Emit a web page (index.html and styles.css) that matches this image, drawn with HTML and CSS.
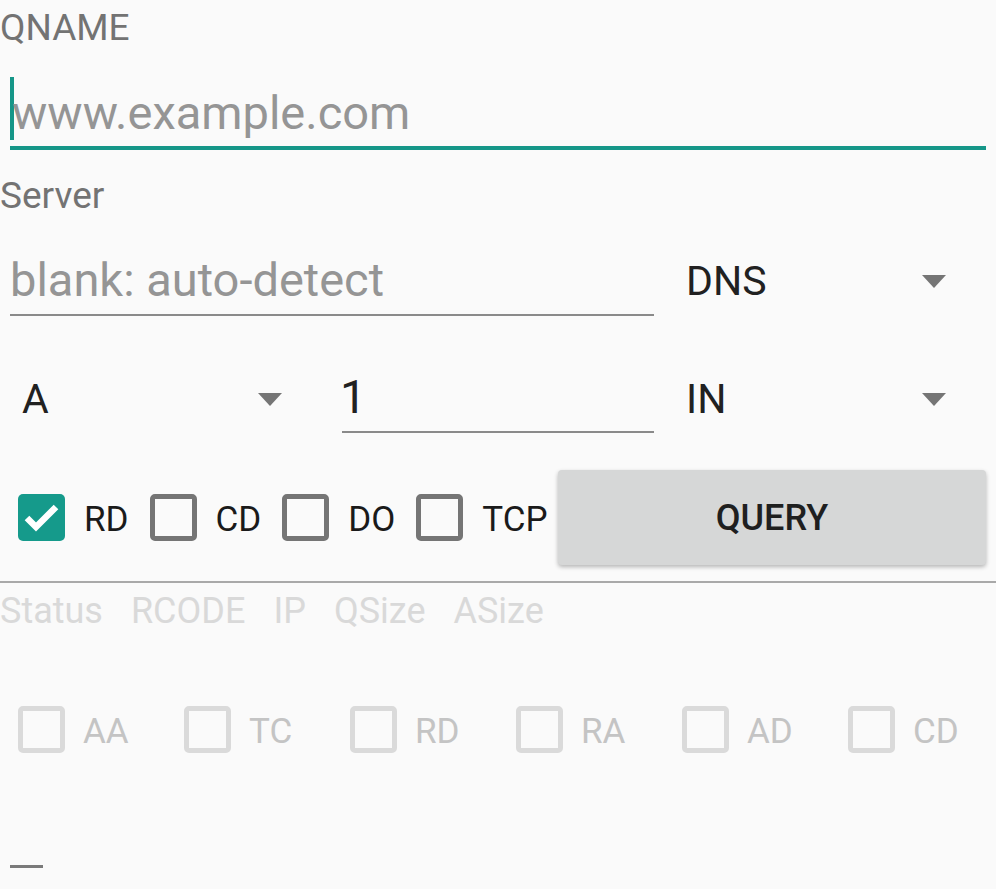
FILE: index.html
```html
<!DOCTYPE html>
<html>
<head>
<meta charset="utf-8">
<link rel="stylesheet" href="styles.css">
</head>
<body>
<div class="page">
  <div class="label">QNAME</div>
  <div class="qfield"><span class="caret"></span><span class="ph">www.example.com</span></div>

  <div class="label server">Server</div>
  <div class="row r2">
    <div class="field wide"><span class="ph">blank: auto-detect</span></div>
    <div class="spinner"><span class="val">DNS</span><span class="tri"></span></div>
  </div>

  <div class="row r3">
    <div class="spinner sp-type"><span class="val">A</span><span class="tri"></span></div>
    <div class="field small"><span class="val-edit">1</span></div>
    <div class="spinner sp-class"><span class="val">IN</span><span class="tri"></span></div>
  </div>

  <div class="row opts">
    <div class="cbitem">
      <span class="cb checked"><svg viewBox="0 0 47 47" width="47" height="47"><polyline points="9,24 18,33 38,13" fill="none" stroke="#ffffff" stroke-width="6.5"/></svg></span>
      <span class="cblabel">RD</span>
    </div>
    <div class="cbitem"><span class="cb"></span><span class="cblabel">CD</span></div>
    <div class="cbitem"><span class="cb"></span><span class="cblabel">DO</span></div>
    <div class="cbitem"><span class="cb"></span><span class="cblabel">TCP</span></div>
    <div class="btn">QUERY</div>
  </div>

  <div class="divider"></div>

  <div class="stats">
    <span>Status</span><span>RCODE</span><span>IP</span><span>QSize</span><span>ASize</span>
  </div>

  <div class="flags">
    <div class="flag"><span class="cb dis"></span><span>AA</span></div>
    <div class="flag"><span class="cb dis"></span><span>TC</span></div>
    <div class="flag"><span class="cb dis"></span><span>RD</span></div>
    <div class="flag"><span class="cb dis"></span><span>RA</span></div>
    <div class="flag"><span class="cb dis"></span><span>AD</span></div>
    <div class="flag"><span class="cb dis"></span><span>CD</span></div>
  </div>

  <div class="dash"></div>
</div>
</body>
</html>
```

FILE: styles.css
```css
html, body {
  margin: 0;
  padding: 0;
  background: #fafafa;
}
body {
  font-family: Roboto, "Noto Sans", "Liberation Sans", sans-serif;
  width: 996px;
  height: 889px;
  overflow: hidden;
}
.label {
  font-size: 37px;
  line-height: 55px;
  color: #737373;
}
.server {
  line-height: 46px;
  margin-top: 23px;
}
.qfield {
  display: flex;
  align-items: flex-start;
  margin: 0 10px;
  padding-top: 22px;
  padding-bottom: 2px;
  border-bottom: 4px solid #159688;
}
.caret {
  width: 4px;
  height: 63px;
  background: #159688;
  flex: none;
}
.ph {
  font-size: 47px;
  line-height: 63px;
  color: #959595;
}
.qfield .ph {
  margin-top: 4px;
  margin-left: -2px;
}
.row {
  display: flex;
  align-items: flex-start;
}
.field {
  flex: none;
  padding-top: 31px;
  padding-bottom: 4px;
  border-bottom: 2px solid #8a8a8a;
  font-size: 47px;
  line-height: 60px;
  height: 60px;
  box-sizing: content-box;
}
.field .ph {
  line-height: 60px;
}
.wide {
  margin-left: 10px;
  width: 644px;
}
.spinner {
  flex: 1;
  display: flex;
  align-items: center;
  justify-content: space-between;
  margin-left: 32px;
  padding-top: 32px;
  padding-right: 50px;
  height: 60px;
  font-size: 41px;
  line-height: 60px;
  color: #212121;
}
.tri {
  width: 0;
  height: 0;
  border-left: 12.5px solid transparent;
  border-right: 12.5px solid transparent;
  border-top: 13px solid #757575;
}
.r3 .spinner {
  padding-top: 53px;
}
.sp-type {
  flex: none;
  width: 260px;
  margin-left: 10px;
  padding-left: 12px;
  padding-right: 40px;
}
.small {
  margin-left: 20px;
  width: 312px;
  padding-top: 51px;
}
.val-edit {
  color: #212121;
  margin-left: -2px;
}
.opts {
  margin-top: 37px;
  height: 95px;
  align-items: center;
  padding-left: 18px;
}
.cbitem {
  display: flex;
  align-items: center;
  gap: 19px;
  margin-right: 21px;
  flex: none;
}
.cbitem:nth-child(4) {
  margin-right: 0;
}
.cb {
  display: block;
  width: 47px;
  height: 47px;
  box-sizing: border-box;
  border: 5px solid #757575;
  border-radius: 5px;
  flex: none;
}
.cb.checked {
  border: none;
  background: #159a8b;
}
.cb.checked svg {
  display: block;
}
.cblabel {
  font-size: 35px;
  line-height: 41px;
  padding-top: 3px;
  color: #1a1a1a;
}
.btn {
  flex: none;
  margin-left: auto;
  margin-right: 10px;
  width: 428px;
  height: 95px;
  background: #d6d7d7;
  border-radius: 4px;
  box-shadow: 0 2px 4px rgba(0, 0, 0, 0.28);
  display: flex;
  align-items: center;
  justify-content: center;
  font-size: 36px;
  font-weight: 500;
  color: #1f1f1f;
}
.divider {
  margin-top: 16px;
  height: 2px;
  background: #a9a9a9;
}
.stats {
  display: flex;
  gap: 28px;
  margin-top: 6px;
  font-size: 36px;
  line-height: 44px;
  color: #d9d9d9;
}
.flags {
  display: grid;
  grid-template-columns: repeat(6, 1fr);
  margin-top: 73px;
}
.flag {
  display: flex;
  align-items: center;
  gap: 18px;
  padding-left: 18px;
  font-size: 35px;
  line-height: 41px;
  color: #c4c4c4;
}
.flag span:last-child {
  padding-top: 3px;
}
.cb.dis {
  border-color: #dadada;
}
.dash {
  margin: 112px 0 0 10px;
  width: 33px;
  height: 3px;
  background: #7a7a7a;
}
```
